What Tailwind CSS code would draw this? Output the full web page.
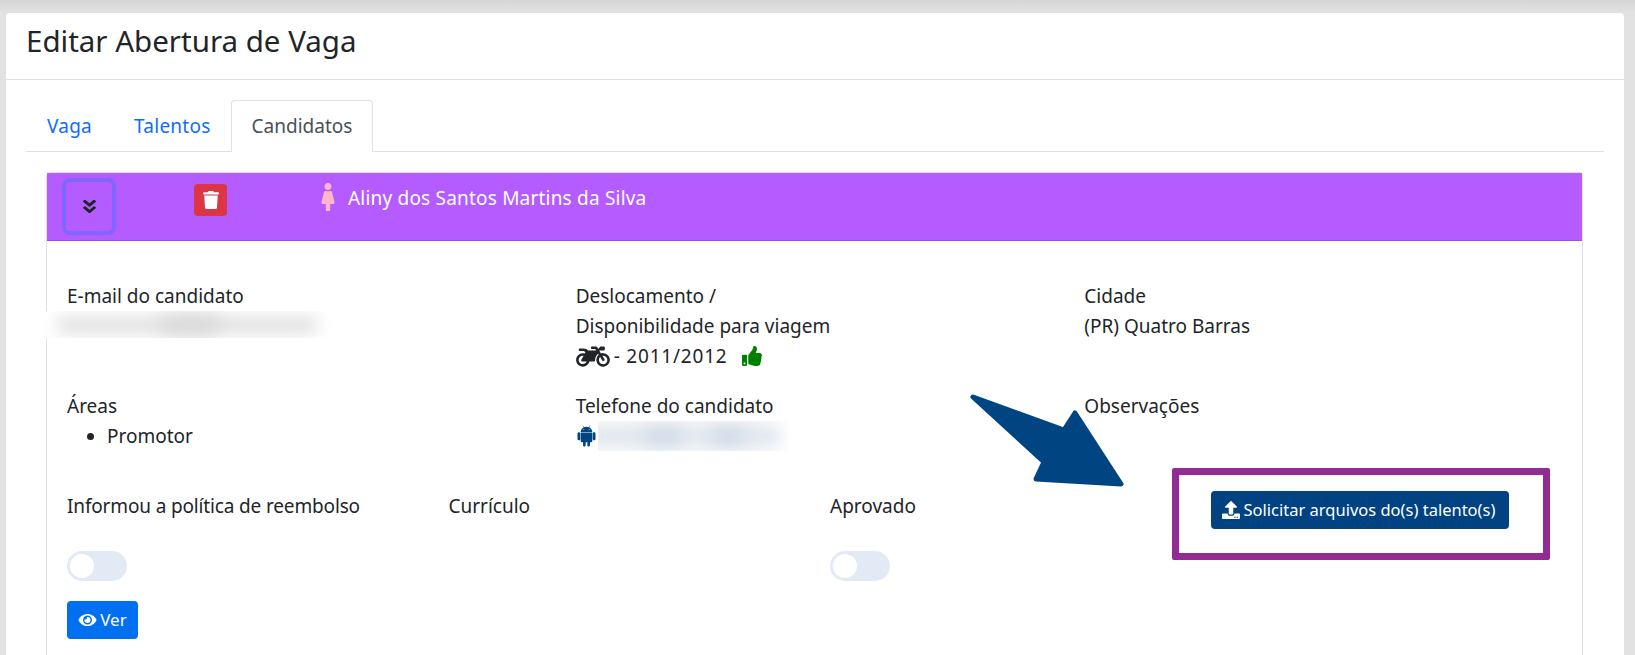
<!DOCTYPE html>
<html lang="en">
<head>
  <meta charset="UTF-8" />
  <title>Editar Abertura de Vaga</title>
  <script src="https://cdn.jsdelivr.net/npm/@tailwindcss/browser@4"></script>
</head>
<body class="relative h-[655px] overflow-hidden bg-[#e2e2e2] font-['Noto_Sans',sans-serif] text-[19px] leading-[30px] text-[#212529]">

  <div class="h-[13px] bg-gradient-to-b from-[#d6d6d6] to-[#e2e2e2]"></div>

  <!-- Card -->
  <div class="ml-[6px] h-[642px] w-[1618px] rounded-t-[4px] bg-white">
    <div class="flex h-[67px] items-center border-b border-[#dee2e6] pb-[11px] pl-[20px]">
      <h1 class="text-[29.5px] leading-[34px]">Editar Abertura de Vaga</h1>
    </div>

    <div class="px-[20px] pt-[20px]">
      <!-- Tabs -->
      <div class="flex h-[52px] border-b border-[#dee2e6]">
        <a class="px-[21px] pt-[11px] tracking-[0.25px] text-[#0d6efd]">Vaga</a>
        <a class="pr-[20px] pl-[21px] pt-[11px] tracking-[0.25px] text-[#0d6efd]">Talentos</a>
        <a class="h-[52px] rounded-t-[4px] border border-b-0 border-[#dee2e6] bg-white px-[20px] pt-[10px] text-[#495057]">Candidatos</a>
      </div>

      <!-- Candidate panel -->
      <div class="mt-[20px] ml-[20px] h-[500px] w-[1537px] rounded-t-[4px] border border-[#dee2e6]">
        <div class="flex h-[68px] border-b border-[#9d4ee0] bg-[#b45cff]">
          <button class="mt-[5px] ml-[15px] flex h-[57px] w-[54px] items-center justify-center rounded-[8px] border-[4px] border-[#8065ff]">
            <svg class="h-[17px] w-[13px] fill-[#212529]" viewBox="0 0 320 512" preserveAspectRatio="none"><path d="M143 256.3L7 120.3c-9.4-9.4-9.4-24.6 0-33.9l22.6-22.6c9.4-9.4 24.6-9.4 33.9 0l96.4 96.4 96.4-96.4c9.4-9.4 24.6-9.4 33.9 0L313 86.3c9.4 9.4 9.4 24.6 0 33.9l-136 136c-9.4 9.5-24.6 9.5-34 .1zm34 192l136-136c9.4-9.4 9.4-24.6 0-33.9l-22.6-22.6c-9.4-9.4-24.6-9.4-33.9 0L160 352.1l-96.4-96.4c-9.4-9.4-24.6-9.4-33.9 0L7 278.3c-9.4 9.4-9.4 24.6 0 33.9l136 136c9.4 9.5 24.6 9.5 34 .1z"/></svg>
          </button>
          <button class="mt-[11px] ml-[78px] flex h-[32px] w-[33px] items-center justify-center rounded-[4px] bg-[#dc3545]">
            <svg class="h-[18px] w-[16px] fill-white" viewBox="0 0 448 512"><path d="M432 32H312l-9.4-18.7A24 24 0 0 0 281.1 0H166.8a23.72 23.72 0 0 0-21.4 13.3L136 32H16A16 16 0 0 0 0 48v32a16 16 0 0 0 16 16h416a16 16 0 0 0 16-16V48a16 16 0 0 0-16-16zM53.2 467a48 48 0 0 0 47.9 45h245.8a48 48 0 0 0 47.9-45L416 128H32z"/></svg>
          </button>
          <svg class="mt-[10px] ml-[94px] h-[28px] w-[14px] fill-[#ffb6c8]" viewBox="0 0 256 512"><path d="M128 0c35.346 0 64 28.654 64 64s-28.654 64-64 64c-35.346 0-64-28.654-64-64S92.654 0 128 0m119.283 354.179l-48-192A24 24 0 0 0 176 144h-11.36c-22.711 10.443-49.59 10.894-73.28 0H80a24 24 0 0 0-23.283 18.179l-48 192C4.935 369.305 16.383 384 32 384h56v104c0 13.255 10.745 24 24 24h32c13.255 0 24-10.745 24-24V384h56c15.591 0 27.071-14.671 23.283-29.821z"/></svg>
          <span class="mt-[10px] ml-[13px] tracking-[0.2px] text-white">Aliny dos Santos Martins da Silva</span>
        </div>

        <div class="px-[19px] pt-[40px]">
          <!-- Row 1 -->
          <div class="ml-[1px] grid grid-cols-3 gap-x-[30px]">
            <div>
              <p>E-mail do candidato</p>
            </div>
            <div>
              <p>Deslocamento /</p>
              <p>Disponibilidade para viagem</p>
              <p class="flex items-center">
                <svg class="h-[27px] w-[34px] fill-[#212529]" viewBox="0 0 640 512"><path d="M512.9 192c-14.9-.1-29.1 2.3-42.4 6.9L437.6 144H520c13.3 0 24-10.7 24-24V88c0-13.3-10.7-24-24-24h-45.3c-6.8 0-13.3 2.9-17.8 7.9l-37.5 41.7-22.8-38C392.2 68.4 384.4 64 376 64h-80c-8.8 0-16 7.2-16 16v16c0 8.8 7.2 16 16 16h66.4l19.2 32H227.9c-17.7-23.1-44.9-40-99.9-40H72.5C59 104 47.7 115 48 128.5c.2 13 10.9 23.5 24 23.5h56c24.5 0 38.7 10.9 47.8 24.8l-11.3 20.5c-13-3.9-26.9-5.7-41.3-5.2C55.9 194.5 1.6 249.6 0 317c-1.6 72.1 56.3 131 128 131 59.6 0 109.7-40.8 124-96h84.2c13.7 0 24.6-11.4 24-25.1-2.1-47.1 17.5-93.7 56.2-125l12.5 20.8c-27.6 23.7-45.1 58.9-44.8 98.2.5 69.6 57.2 126.5 126.8 127.1 71.6.7 129.8-57.5 129.2-129.1-.7-69.5-57.6-126-127.2-126.9zM128 400c-44.1 0-80-35.9-80-80s35.9-80 80-80c4.2 0 8.4.3 12.5 1L99 316.4c-8.8 16 2.8 35.6 21 35.6h81.3c-12.4 28.2-40.6 48-73.3 48zm384 0c-44.1 0-80-35.9-80-80 0-21.4 8.4-40.8 22.1-55.2l44.3 74c3.5 5.8 11 7.6 16.8 4.1l20.6-12.3c5.7-3.4 7.6-10.9 4.1-16.6l-42.9-71.4c4.6-.9 9.6-1.6 14.9-1.6 44.1 0 80 35.9 80 80s-35.8 80.9-80 80z"/></svg>
                <span class="ml-[4px] tracking-[0.8px]">- 2011/2012</span>
                <svg class="ml-[14px] h-[20px] w-[20px] fill-[#008000]" viewBox="0 0 512 512"><path d="M104 224H24c-13.255 0-24 10.745-24 24v240c0 13.255 10.745 24 24 24h80c13.255 0 24-10.745 24-24V248c0-13.255-10.745-24-24-24zM64 472c-13.255 0-24-10.745-24-24s10.745-24 24-24 24 10.745 24 24-10.745 24-24 24zM384 81.452c0 42.416-25.97 66.208-33.277 94.548h101.723c33.397 0 59.397 27.746 59.553 58.098.084 17.938-7.546 37.249-19.439 49.197l-.11.11c9.836 23.337 8.237 56.037-9.308 79.469 8.681 25.895-.069 57.704-16.382 74.757 4.298 17.598 2.244 32.575-6.148 44.632C440.202 511.587 389.616 512 346.839 512l-2.845-.001c-48.287-.017-87.806-17.598-119.56-31.725-15.957-7.099-36.821-15.887-52.651-16.178-6.54-.12-11.783-5.457-11.783-11.998v-213.77c0-3.2 1.282-6.271 3.558-8.521 39.614-39.144 56.648-80.587 89.117-113.111 14.804-14.832 20.188-37.236 25.393-58.902C282.515 39.293 291.817 0 312 0c24 0 72 8 72 81.452z"/></svg>
              </p>
            </div>
            <div>
              <p>Cidade</p>
              <p>(PR) Quatro Barras</p>
            </div>
          </div>

          <!-- Row 2 -->
          <div class="mt-[20px] ml-[1px] grid grid-cols-3 gap-x-[30px]">
            <div>
              <p>Áreas</p>
              <ul class="list-disc pl-[40px]"><li>Promotor</li></ul>
            </div>
            <div>
              <p>Telefone do candidato</p>
              <p class="flex h-[30px] items-center">
                <svg class="h-[24px] w-[21px] fill-[#014482]" viewBox="0 0 448 512"><path d="M89.6 204.5v115.8c0 15.4-12.1 27.7-27.5 27.7-15.3 0-30.1-12.4-30.1-27.7V204.5c0-15.1 14.8-27.5 30.1-27.5 15.1 0 27.5 12.4 27.5 27.5zm10.8 157c0 16.4 13.2 29.6 29.6 29.6h19.9l.3 61.1c0 36.9 55.2 36.6 55.2 0v-61.1h37.2v61.1c0 36.7 55.5 36.8 55.5 0v-61.1h20.2c16.2 0 29.4-13.2 29.4-29.6V182.1H100.4v179.4zm248-189.1H99.3c0-42.8 25.6-80 63.6-99.4l-19.1-35.3c-2.8-4.9 4.3-8 6.7-3.8l19.4 35.6c34.9-15.5 75-14.7 108.3 0L297.5 34c2.5-4.3 9.5-1.1 6.7 3.8L285.1 73c37.7 19.4 63.3 56.6 63.3 99.4zm-170.7-55.5c0-5.7-4.6-10.5-10.5-10.5-5.7 0-10.2 4.8-10.2 10.5s4.6 10.5 10.2 10.5c5.9 0 10.5-4.8 10.5-10.5zm113.4 0c0-5.7-4.6-10.5-10.2-10.5-5.9 0-10.5 4.8-10.5 10.5s4.6 10.5 10.5 10.5c5.6 0 10.2-4.8 10.2-10.5zm94.8 60.1c-15.1 0-27.5 12.1-27.5 27.5v115.8c0 15.4 12.4 27.7 27.5 27.7 15.4 0 30.1-12.4 30.1-27.7V204.5c0-15.4-14.8-27.5-30.1-27.5z"/></svg>
              </p>
            </div>
            <div>
              <p>Observações</p>
            </div>
          </div>

          <!-- Row 3 -->
          <div class="mt-[40px] ml-[1px] grid grid-cols-4 gap-x-[30px]">
            <div>
              <p class="whitespace-nowrap tracking-[-0.15px]">Informou a política de reembolso</p>
              <div class="mt-[30px] flex h-[30px] w-[60px] items-center rounded-full bg-[#e2eaf6] pl-[3px]">
                <span class="h-[24px] w-[24px] rounded-full bg-white"></span>
              </div>
              <button class="mt-[20px] flex h-[38px] w-[71px] items-center justify-center gap-[3px] rounded-[4px] bg-[#006ff0] text-[17px] text-white">
                <svg class="h-[16px] w-[19px] fill-white" viewBox="0 0 576 512"><path d="M572.52 241.4C518.29 135.59 410.93 64 288 64S57.68 135.64 3.48 241.41a32.35 32.35 0 0 0 0 29.19C57.71 376.41 165.07 448 288 448s230.32-71.64 284.52-177.41a32.35 32.35 0 0 0 0-29.19zM288 400a144 144 0 1 1 144-144 143.93 143.93 0 0 1-144 144zm0-240a95.31 95.31 0 0 0-25.31 3.79 47.85 47.85 0 0 1-66.9 66.9A95.78 95.78 0 1 0 288 160z"/></svg>
                Ver
              </button>
            </div>
            <div><p>Currículo</p></div>
            <div>
              <p>Aprovado</p>
              <div class="mt-[30px] flex h-[30px] w-[60px] items-center rounded-full bg-[#e2eaf6] pl-[3px]">
                <span class="h-[24px] w-[24px] rounded-full bg-white"></span>
              </div>
            </div>
            <div>
              <button class="-ml-[1px] flex h-[38px] w-[298px] items-center gap-[4px] rounded-[4px] bg-[#014282] pl-[11px] text-[16.5px] text-white">
                <svg class="h-[18px] w-[18px] fill-white" viewBox="0 0 512 512"><path d="M296 384h-80c-13.3 0-24-10.7-24-24V192h-87.7c-17.8 0-26.7-21.5-14.1-34.1L242.3 5.7c7.5-7.5 19.8-7.5 27.3 0l152.2 152.2c12.6 12.6 3.7 34.1-14.1 34.1H320v168c0 13.3-10.7 24-24 24zm216-8v112c0 13.3-10.7 24-24 24H24c-13.3 0-24-10.7-24-24V376c0-13.3 10.7-24 24-24h136v8c0 30.9 25.1 56 56 56h80c30.9 0 56-25.1 56-56v-8h136c13.3 0 24 10.7 24 24zm-124 88c0-11-9-20-20-20s-20 9-20 20 9 20 20 20 20-9 20-20zm64 0c0-11-9-20-20-20s-20 9-20 20 9 20 20 20 20-9 20-20z"/></svg>
                Solicitar arquivos do(s) talento(s)
              </button>
            </div>
          </div>
        </div>
      </div>
    </div>
  </div>

  <!-- Redaction blurs over the contact data -->
  <div class="absolute top-[311px] left-[40px] h-[27px] w-[295px] overflow-hidden bg-white">
    <div class="mx-[16px] mt-[5px] h-[18px] rounded-full bg-[#e2e2e2] blur-[8px]"></div>
    <div class="absolute top-[5px] left-[120px] h-[17px] w-[60px] rounded-full bg-[#d6d6d6] blur-[9px]"></div>
  </div>
  <div class="absolute top-[421px] left-[598px] h-[30px] w-[190px] overflow-hidden bg-white">
    <div class="-ml-[10px] mt-[2px] mr-[6px] h-[26px] rounded-r-full bg-[#e2e8ef] blur-[8px]"></div>
    <div class="absolute top-[5px] left-[45px] h-[20px] w-[40px] rounded-full bg-[#d4dee9] blur-[7px]"></div>
    <div class="absolute top-[5px] left-[112px] h-[20px] w-[36px] rounded-full bg-[#d4dee9] blur-[7px]"></div>
  </div>

  <!-- Annotation: arrow and highlight box -->
  <svg class="absolute top-0 left-0 h-[655px] w-[1635px]" viewBox="0 0 1635 655">
    <path d="M973 397 L1064 430 L1075 413 L1121 484 L1036 479 L1044 462 Z" fill="#014482" stroke="#014482" stroke-width="5" stroke-linejoin="round"/>
  </svg>
  <div class="absolute top-[468px] left-[1172px] h-[92px] w-[378px] rounded-[2px] border-[7px] border-[#922b93]"></div>

</body>
</html>
